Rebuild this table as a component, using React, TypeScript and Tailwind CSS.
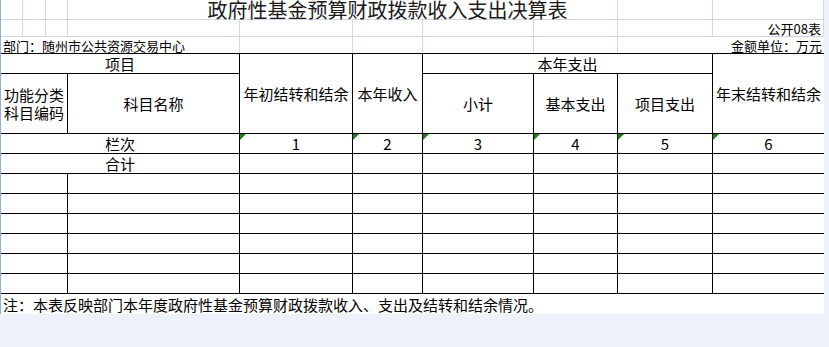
const grid = "border-r border-b border-[#d0d7e5]";
const cell = "flex items-center justify-center border-r border-b border-black";
const last = "flex items-center justify-center border-b border-black";

const Tick = () => (
  <span className="absolute left-0 top-0 h-[6px] w-[6px] bg-[#1b7f1b] [clip-path:polygon(0_0,100%_0,0_100%)]" />
);

export default function App() {
  const nums = ["1", "2", "3", "4", "5", "6"];
  const empty = [0, 1, 2, 3, 4, 5];

  return (
    <div className="w-[829px] h-[347px] bg-[#edf1f9] font-['Noto_Sans_CJK_SC',sans-serif] text-black">
      <div className="w-[824px] border-l border-[#97afd0] bg-white grid grid-cols-[22px_23px_22px_172px_113px_70px_111px_84px_95px_111px] grid-rows-[20px_17px_16px_21px_60px_20px_20px_repeat(6,20px)_20px] text-[15px] leading-[17px]">
        {/* sheet top rows */}
        <div className={grid} />
        <div className={grid} />
        <div className={grid} />
        <div className={`col-span-5 flex items-start justify-center pl-[90px] whitespace-nowrap text-[20px] leading-[20px] text-[#1a1a1a] ${grid}`}>
          政府性基金预算财政拨款收入支出决算表
        </div>
        <div className={grid} />
        <div className={grid} />

        <div className={grid} />
        <div className={grid} />
        <div className={grid} />
        <div className={grid} />
        <div className={grid} />
        <div className={grid} />
        <div className={grid} />
        <div className={grid} />
        <div className={grid} />
        <div className={`flex items-center justify-end pr-[2px] text-[13px] leading-[15px] ${grid}`}>公开08表</div>

        <div className="col-span-4 flex items-center pl-[2px] text-[13px] leading-[15px] whitespace-nowrap border-r border-[#d0d7e5]">
          部门：随州市公共资源交易中心
        </div>
        <div className="border-r border-[#d0d7e5]" />
        <div className="border-r border-[#d0d7e5]" />
        <div className="border-r border-[#d0d7e5]" />
        <div className="border-r border-[#d0d7e5]" />
        <div className="col-span-2 flex items-center justify-end pr-[2px] text-[13px] leading-[15px] whitespace-nowrap">
          金额单位：万元
        </div>

        {/* header */}
        <div className={`col-span-4 border-t ${cell}`}>项目</div>
        <div className={`row-span-2 border-t ${cell}`}>年初结转和结余</div>
        <div className={`row-span-2 border-t ${cell}`}>本年收入</div>
        <div className={`col-span-3 border-t ${cell}`}>本年支出</div>
        <div className={`row-span-2 border-t ${last} whitespace-nowrap`}>年末结转和结余</div>

        <div className={`col-span-3 text-center leading-[18px] ${cell}`}>
          <span>功能分类<br />科目编码</span>
        </div>
        <div className={cell}>科目名称</div>
        <div className={cell}>小计</div>
        <div className={cell}>基本支出</div>
        <div className={cell}>项目支出</div>

        {/* 栏次 */}
        <div className={`col-span-4 ${cell}`}>栏次</div>
        {nums.map((n, i) => (
          <div key={n} className={`relative ${i === 5 ? last : cell}`}>
            <Tick />
            {n}
          </div>
        ))}

        <div className={`col-span-4 ${cell}`}>合计</div>
        {nums.map((n, i) => (
          <div key={n} className={i === 5 ? last : cell} />
        ))}

        {empty.map((r) => (
          <div key={r} className="contents">
            <div className={`col-span-3 ${cell}`} />
            <div className={cell} />
            <div className={cell} />
            <div className={cell} />
            <div className={cell} />
            <div className={cell} />
            <div className={cell} />
            <div className={last} />
          </div>
        ))}

        <div className="col-span-10 flex items-center pl-[2px] whitespace-nowrap">
          注：本表反映部门本年度政府性基金预算财政拨款收入、支出及结转和结余情况。
        </div>
      </div>
    </div>
  );
}
